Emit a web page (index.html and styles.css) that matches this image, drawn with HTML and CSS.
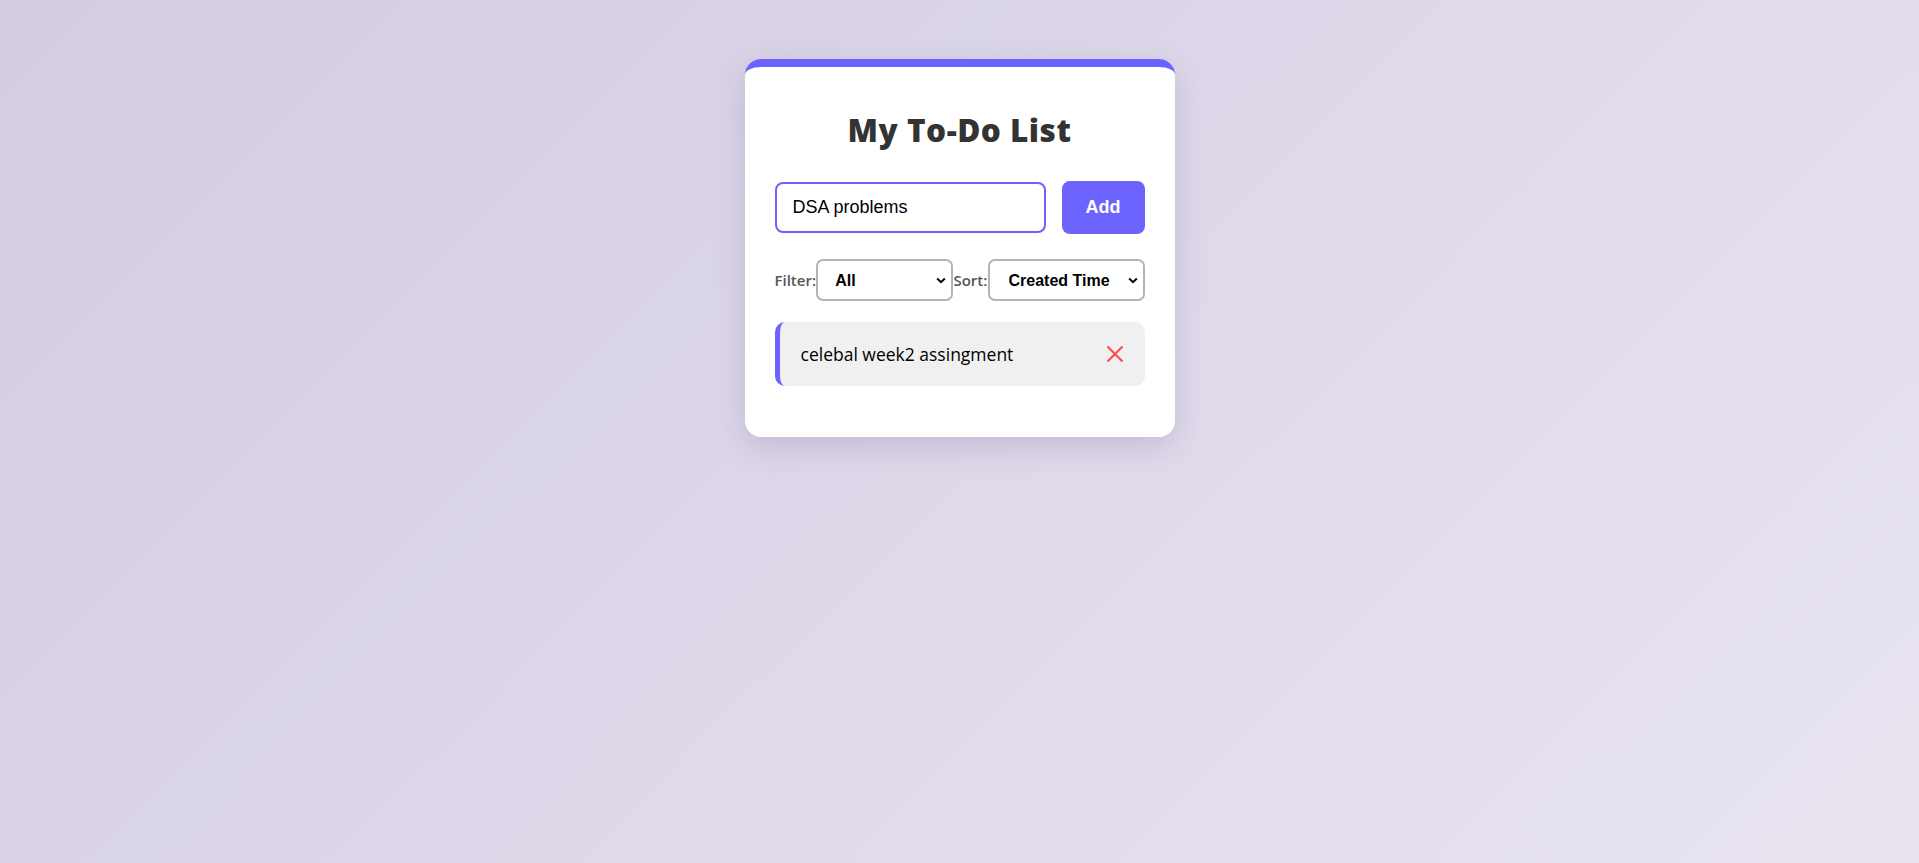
FILE: index.html
```html
<!DOCTYPE html>
<html lang="en">
<head>
<meta charset="utf-8">
<title>My To-Do List</title>
<link rel="stylesheet" href="styles.css">
</head>
<body>
<div class="page">
  <div class="card">
    <h1 class="title">My To-Do List</h1>
    <div class="add-row">
      <input class="task-input" type="text" value="DSA problems">
      <button class="add-btn">Add</button>
    </div>
    <div class="controls">
      <label class="ctl-label">Filter:</label>
      <select class="ctl-select filter-select">
        <option>All</option>
        <option>Completed</option>
        <option>Pending</option>
      </select>
      <label class="ctl-label">Sort:</label>
      <select class="ctl-select sort-select">
        <option>Created Time</option>
        <option>A-Z</option>
      </select>
    </div>
    <ul class="task-list">
      <li class="task">
        <span class="task-text">celebal week2 assingment</span>
        <button class="del-btn" aria-label="Delete">
          <svg width="18" height="18" viewBox="0 0 18 18"><path d="M1.5 1.5 L16.5 16.5 M16.5 1.5 L1.5 16.5" stroke="#ff4d4d" stroke-width="2.2" stroke-linecap="butt" fill="none"/></svg>
        </button>
      </li>
    </ul>
  </div>
</div>
</body>
</html>
```

FILE: styles.css
```css
* { box-sizing: border-box; }

html, body { height: 100%; }

body {
  margin: 0;
  min-height: 100vh;
  background: linear-gradient(135deg, #d3cce3 0%, #e9e4f0 100%);
  font-family: "Open Sans", "Noto Sans", sans-serif;
}

.page {
  display: flex;
  justify-content: center;
  padding-top: 59px;
}

.card {
  width: 430px;
  background: #fff;
  border-top: 8px solid #6c63ff;
  border-radius: 16px;
  padding: 30px 30px 30px;
  box-shadow: 0 10px 30px rgba(80, 60, 120, 0.18);
}

.title {
  margin: 13px 0 0;
  line-height: 40px;
  font-size: 31.5px;
  font-weight: 800;
  color: #333;
  text-align: center;
  letter-spacing: 0.5px;
}

.add-row {
  display: flex;
  align-items: center;
  gap: 16px;
  margin-top: 31px;
}

.task-input {
  width: 271px;
  height: 51px;
  border: 2px solid #6c63ff;
  border-radius: 8px;
  padding: 0 16px;
  font-family: "Liberation Sans", Arial, sans-serif;
  font-size: 18px;
  color: #000;
  outline: none;
  background: #fff;
}

.add-btn {
  width: 83px;
  height: 53px;
  border: none;
  border-radius: 8px;
  background: #6c63ff;
  color: #fff;
  font-family: "Liberation Sans", Arial, sans-serif;
  font-weight: bold;
  font-size: 18px;
  padding: 0;
}

.controls {
  display: flex;
  align-items: center;
  justify-content: space-between;
  margin-top: 25px;
}

.ctl-label {
  font-size: 15px;
  font-weight: 600;
  color: #555;
}

.ctl-select {
  -webkit-appearance: none;
  appearance: none;
  height: 42px;
  border: 2px solid #b3b3b3;
  border-radius: 7px;
  background-color: #fff;
  background-image: url("data:image/svg+xml;utf8,<svg xmlns='http://www.w3.org/2000/svg' width='10' height='7' viewBox='0 0 10 7'><path d='M1.2 1.5 L5 5.2 L8.8 1.5' stroke='black' stroke-width='2' fill='none'/></svg>");
  background-repeat: no-repeat;
  background-position: right 5px center;
  font-family: "Liberation Sans", Arial, sans-serif;
  font-weight: bold;
  font-size: 16px;
  color: #000;
  padding: 0 20px 0 17px;
}

.filter-select { width: 137px; }
.sort-select { width: 157px; padding-left: 19px; }

.task-list {
  list-style: none;
  margin: 21px 0 21px;
  padding: 0;
}

.task {
  display: flex;
  align-items: center;
  justify-content: space-between;
  height: 64px;
  background: #f0f0f0;
  border-left: 5px solid #6c63ff;
  border-radius: 10px;
  padding: 0 21px 0 21px;
}

.task-text {
  font-size: 17.5px;
  font-weight: 500;
  color: #000;
}

.del-btn {
  display: flex;
  align-items: center;
  justify-content: center;
  border: none;
  background: transparent;
  padding: 0;
  width: 18px;
  height: 18px;
}
```
